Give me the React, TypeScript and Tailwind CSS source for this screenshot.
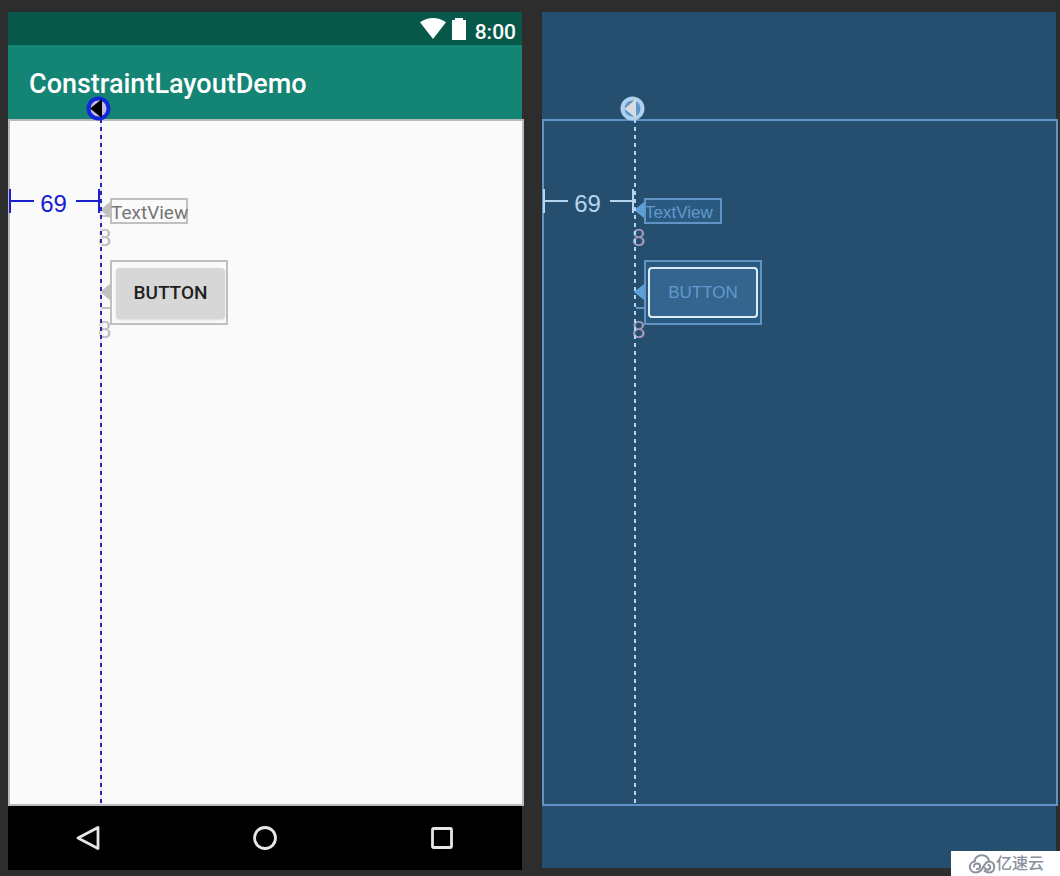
import type { ReactNode } from "react";
import clsx from "clsx";

type Mode = "design" | "blueprint";

interface SurfaceProps {
  mode: Mode;
}

function WifiIcon() {
  return (
    <svg className="h-6 w-7" viewBox="0 0 28 24" fill="currentColor" aria-hidden="true">
      <path d="M1 5.200C9 -.5 19 -.5 27 5.200L14 22z" />
    </svg>
  );
}

function BatteryIcon() {
  return (
    <svg className="h-6 w-4" viewBox="0 0 16 24" fill="currentColor" aria-hidden="true">
      <path d="M4 1h8v2h3v20H1V3h3z" />
    </svg>
  );
}

function CloudLogo() {
  return (
    <svg
      className="h-5 w-7"
      viewBox="0 0 28 20"
      fill="none"
      stroke="currentColor"
      strokeWidth="2"
      strokeLinecap="round"
      aria-hidden="true"
    >
      <path d="M6.500 7C7.500 3 10.500 1.200 13.800 1.200S20 3 21 6.500" />
      <path d="M7 7.300C4 7.600 1.800 10 1.800 13s2.400 5.500 5.700 5.500c3 0 5-1.300 6.500-3.600l3-4.700c1.200-1.900 2.700-3 4.700-2.800 2.700.2 4.500 2.700 4.500 5.600 0 3.200-2.200 5.500-5.200 5.500-2 0-3.500-.8-4.500-2" />
      <path d="M6 12.500c0-1.800 1.500-3 3.200-2.900 1.800.1 2.900 1.500 2.900 3 0 1.700-1.500 2.700-3.100 2.400" />
      <path d="M17 14c.5 1.300 1.600 1.900 2.900 1.700 1.400-.2 2.400-1.300 2.300-2.700-.1-1-.8-1.800-1.800-1.900" />
    </svg>
  );
}

// Handle on top of the vertical guideline
function GuidelineHandle({ mode }: SurfaceProps) {
  const design = mode === "design";
  return (
    <svg className="absolute -top-6 left-[78px] h-[26px] w-[26px]" viewBox="0 0 26 26" aria-hidden="true">
      <circle
        cx="12.500"
        cy="13.500"
        r="10"
        fill={design ? "#c3bcdc" : "#5f97c8"}
        stroke={design ? "#1226dd" : "#b0d0ee"}
        strokeWidth="4"
      />
      <path d="M4 13.500 16 4v19z" fill={design ? "#000" : "#d8dde4"} />
      {!design && <path d="M5 13 13 6" stroke="#7d93a8" strokeWidth="1" />}
    </svg>
  );
}

function Arrow({ mode, className }: SurfaceProps & { className: string }) {
  return (
    <svg className={clsx("absolute h-4 w-3", className)} viewBox="0 0 12 16" aria-hidden="true">
      <path d="M0 8 10 0v6l2 2-2 2v6z" fill={mode === "design" ? "#c0c0c0" : "#5f9fd8"} />
    </svg>
  );
}

// Distance between the parent's left edge and the guideline
function Dimension({ mode }: SurfaceProps) {
  return (
    <div
      className={clsx(
        "absolute left-px top-[70px] flex h-6 w-[91px] items-center",
        mode === "design" ? "text-[#1a20d0]" : "text-[#b4d4f0]"
      )}
    >
      <span className="h-6 w-0.5 bg-current" />
      <span className="h-0.5 flex-1 bg-current" />
      <span className="w-[42px] pt-1.5 pr-0.5 text-center text-2xl leading-6">69</span>
      <span className="h-0.5 flex-1 bg-current" />
      <span className="h-6 w-0.5 bg-current" />
    </div>
  );
}

function Margin({ mode, className }: SurfaceProps & { className: string }) {
  return (
    <span
      className={clsx(
        "absolute left-[90px] text-2xl leading-6",
        mode === "design" ? "text-[#bcbcbc]" : "text-[#a49cbc]",
        className
      )}
    >
      8
    </span>
  );
}

function Surface({ mode }: SurfaceProps) {
  const design = mode === "design";
  const line = design ? "border-[#c0c0c0]" : "border-[#5f94c4]";

  return (
    <div className={clsx("relative -mr-0.5 flex-1 border-2", design ? "border-[#b8babb] bg-[#fafafa]" : "border-[#5f94c4]")}>
      {/* widgets and constraints, placed from the outer edge of the surface */}
      <div className="absolute -inset-0.5">
        <Dimension mode={mode} />

        <Margin mode={mode} className="top-[107px]" />
        <Margin mode={mode} className="top-[199px]" />
        {design && <span className={clsx("absolute left-[94px] top-[96px] w-2 border-t-2", line)} />}
        <span className={clsx("absolute left-[94px] top-[188px] w-2 border-t-2", line)} />

        <div
          className={clsx(
            "absolute left-[102px] top-[79px] flex h-[26px] w-[78px] items-center border-2 whitespace-nowrap",
            line,
            design ? "font-[Roboto] text-[19px] text-[#757575]" : "bg-[#2b5a80] text-[17px] text-[#6299cc]"
          )}
        >
          <span className="-ml-px pt-1">TextView</span>
        </div>

        <div
          className={clsx(
            "absolute left-[102px] top-[141px] h-[65px] w-[118px] border-2",
            line,
            !design && "bg-[#2b5a80]"
          )}
        >
          <button
            type="button"
            className={clsx(
              "absolute h-[51px] rounded-sm",
              design
                ? "left-1 top-1.5 w-[109px] bg-[#d7d7d7] font-[Roboto] text-[19px] font-medium text-[#1f1f1f] shadow-sm"
                : "left-0.5 top-[5px] w-[110px] border-2 border-[#dcebf8] bg-[#33658f] text-[17px] text-[#6299cc]"
            )}
          >
            BUTTON
          </button>
        </div>

        <Arrow mode={mode} className="left-[92px] top-[83px]" />
        <Arrow mode={mode} className="left-[92px] top-[165px]" />

        <div
          className={clsx(
            "absolute bottom-0.5 left-[92px] top-0 w-0.5",
            design
              ? "bg-[repeating-linear-gradient(to_bottom,#2a25b0_0_4px,#e4e2f4_4px_8px)]"
              : "bg-[repeating-linear-gradient(to_bottom,#b4d4f0_0_4px,transparent_4px_8px)]"
          )}
        />
        <GuidelineHandle mode={mode} />
      </div>
    </div>
  );
}

function NavButton({ label, children }: { label: string; children: ReactNode }) {
  return (
    <button type="button" aria-label={label} className="flex size-12 items-center justify-center">
      <svg className="size-6" viewBox="0 0 24 24" fill="none" stroke="#e6e6e6" strokeWidth="2.800" strokeLinejoin="round">
        {children}
      </svg>
    </button>
  );
}

export default function App() {
  return (
    <div className="relative grid min-h-screen grid-cols-2 gap-5 bg-[#2d2d2d] pt-3 pr-1 pb-1.5 pl-2 font-['Liberation_Sans',sans-serif]">
      <section className="flex flex-col">
        <header className="relative font-[Roboto] font-medium text-white">
          <div className="flex h-[33px] items-center justify-end bg-[#08584a] pr-1.5 text-[21px]">
            <WifiIcon />
            <span className="ml-1 flex">
              <BatteryIcon />
            </span>
            <span className="ml-2 pt-2">8:00</span>
          </div>
          <div className="flex h-[74px] items-center bg-[#148574] px-[21px]">
            <h1 className="pt-1 text-[27px]">ConstraintLayoutDemo</h1>
          </div>
        </header>
        <Surface mode="design" />
        <nav className="flex h-16 items-center justify-between bg-black px-14">
          <NavButton label="Back">
            <path d="M2 12 22 1.500v21z" />
          </NavButton>
          <NavButton label="Home">
            <circle cx="12" cy="12" r="10.500" />
          </NavButton>
          <NavButton label="Overview">
            <rect x="2.500" y="2.500" width="19" height="19" rx="1" />
          </NavButton>
        </nav>
      </section>

      <section className="mb-0.5 flex flex-col bg-[#264e6e] pt-[107px] pb-[62px]">
        <Surface mode="blueprint" />
      </section>

      <div className="absolute right-0 bottom-0 flex h-[25px] w-[109px] items-center bg-white pl-[17px] text-[#8a909c]">
        <CloudLogo />
        <span className="pb-1 font-['Noto_Sans_CJK_SC',sans-serif] text-base leading-6 font-medium">亿速云</span>
      </div>
    </div>
  );
}
